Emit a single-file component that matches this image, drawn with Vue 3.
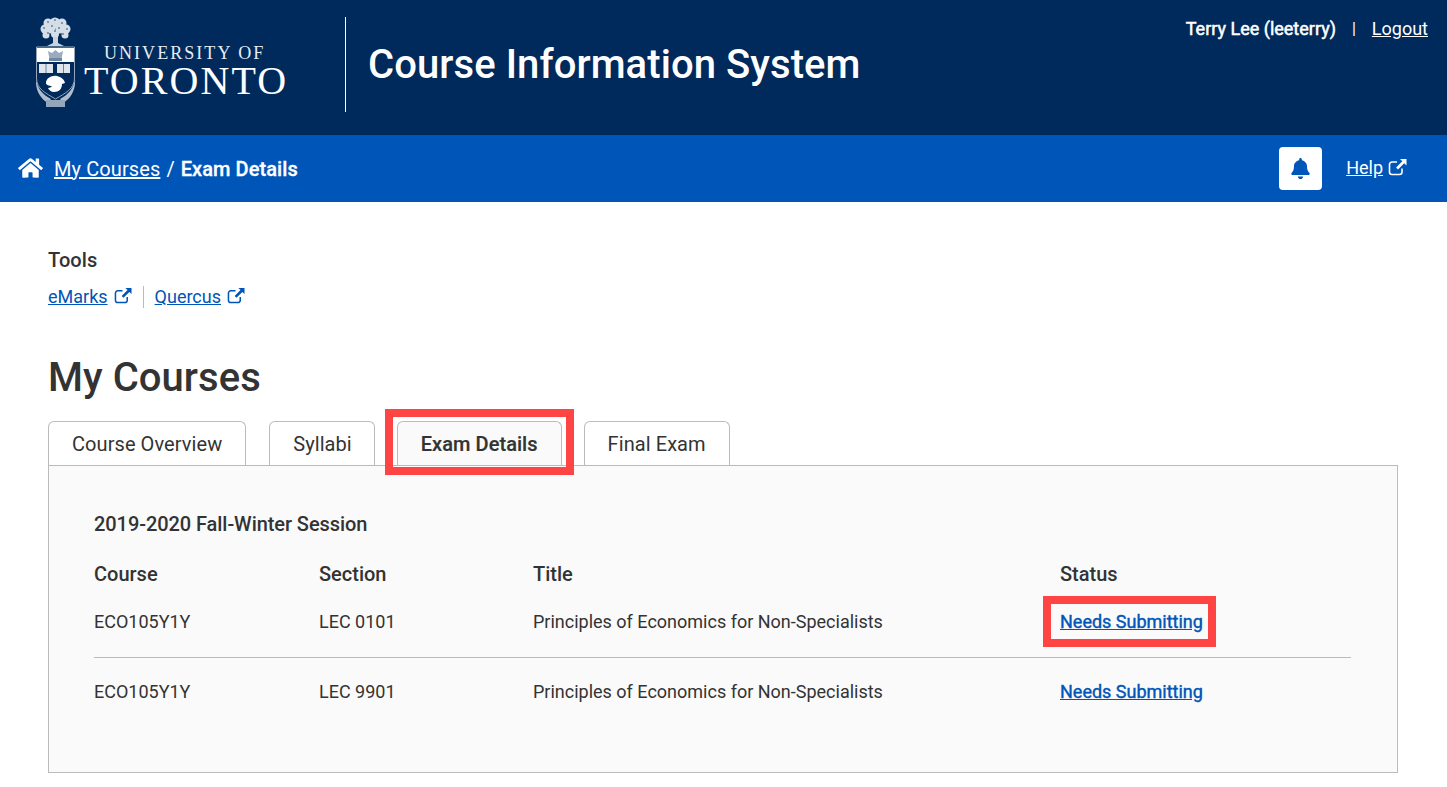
<template>
  <div class="page">
    <!-- Header -->
    <header class="top">
      <div class="logo">
        <svg class="crest" viewBox="0 0 40 90" width="40" height="90">
          <!-- tree -->
          <g fill="#d5dde6">
            <circle cx="19" cy="6" r="5.500" />
            <circle cx="12" cy="6" r="4.500" />
            <circle cx="26" cy="6" r="4.500" />
            <circle cx="9" cy="12" r="4.500" />
            <circle cx="30" cy="12" r="4.500" />
            <circle cx="15" cy="12" r="4.500" />
            <circle cx="24" cy="12" r="4.500" />
            <circle cx="10" cy="18" r="3.500" />
            <circle cx="29" cy="18" r="3.500" />
            <circle cx="19" cy="17" r="4" />
          </g>
          <g fill="#5a779b">
            <circle cx="12" cy="5" r="0.900" />
            <circle cx="19" cy="3" r="0.900" />
            <circle cx="26" cy="6" r="0.900" />
            <circle cx="8" cy="11" r="0.900" />
            <circle cx="16" cy="9" r="0.900" />
            <circle cx="23" cy="11" r="0.900" />
            <circle cx="31" cy="12" r="0.900" />
            <circle cx="12" cy="16" r="0.900" />
            <circle cx="27" cy="17" r="0.900" />
            <circle cx="19" cy="14" r="0.900" />
          </g>
          <path d="M17 20h5v6l6 3H11l6-3z" fill="#c9d3de" />
          <!-- shield -->
          <path d="M0.500 30h38v31c0 11-9 15-19 21C9.500 76 0.500 72 0.500 61z" fill="#002a5c" stroke="#93a6bc" stroke-width="1" />
          <rect x="1" y="31" width="37" height="14" fill="#fff" />
          <path d="M12 34l4 2 3.500-3 3.500 3 4-2-1.500 8h-12z" fill="#9aabbf" />
          <rect x="13" y="41" width="13" height="3" fill="#6d86a3" />
          <!-- books -->
          <path d="M3 47h14v9H3zM21 47h13v9H21z" fill="#dfe5ec" />
          <path d="M10 47v9M27.500 47v9" stroke="#6b84a1" stroke-width="1" />
          <!-- beaver -->
          <path d="M10 66c0-5 6-8 11-7 4 1 7 3 8 7l-3 1c0 5-3 8-8 8-3 0-5-2-6-4 2 0 3-1 4-2-3 0-6-1-6-3z" fill="#fff" />
          <!-- scrolls -->
          <path d="M0 62c1 9 7 16 15 20l-3 4C4 82-1 72 0 62zM39 62c-1 9-7 16-15 20l3 4c8-4 13-14 12-24z" fill="#aebccc" />
          <rect x="10" y="83" width="19" height="7" fill="#93a6bc" />
        </svg>
        <div class="wordmark">
          <span class="uni">UNIVERSITY OF</span>
          <span class="uoft">TORONTO</span>
        </div>
      </div>
      <div class="divider"></div>
      <h1 class="system">Course Information System</h1>
      <div class="user">
        <strong>Terry Lee (leeterry)</strong>
        <span class="pipe">|</span>
        <a href="#">Logout</a>
      </div>
    </header>

    <!-- Breadcrumb bar -->
    <nav class="crumbs">
      <svg class="home" viewBox="0 0 576 512" width="25" height="22">
        <path fill="#fff" d="M280.37 148.26L96 300.11V464a16 16 0 0 0 16 16l112.06-.29a16 16 0 0 0 15.92-16V368a16 16 0 0 1 16-16h64a16 16 0 0 1 16 16v95.64a16 16 0 0 0 16 16.05L464 480a16 16 0 0 0 16-16V300L295.67 148.26a12.19 12.19 0 0 0-15.3 0zM571.6 251.47L488 182.56V44.05a12 12 0 0 0-12-12h-56a12 12 0 0 0-12 12v72.61L318.47 43a48 48 0 0 0-61 0L4.34 251.47a12 12 0 0 0-1.6 16.9l25.5 31A12 12 0 0 0 45.15 301l235.22-193.74a12.19 12.19 0 0 1 15.3 0L530.9 301a12 12 0 0 0 16.9-1.6l25.5-31a12 12 0 0 0-1.7-16.93z" />
      </svg>
      <a href="#" class="crumb-link">My Courses</a>
      <span class="slash">/</span>
      <strong class="crumb-here">Exam Details</strong>
      <button class="bell" type="button">
        <svg viewBox="0 0 448 512" width="19" height="21">
          <path fill="#0055b8" d="M224 512c35.32 0 63.97-28.65 63.97-64H160.03c0 35.35 28.65 64 63.97 64zm215.39-149.71c-19.32-20.76-55.47-51.99-55.47-154.29 0-77.7-54.48-139.9-127.94-155.16V32c0-17.67-14.32-32-31.98-32s-31.98 14.33-31.98 32v20.84C118.56 68.1 64.08 130.3 64.08 208c0 102.3-36.15 133.53-55.47 154.29-6 6.45-8.66 14.16-8.61 21.71.11 16.4 12.98 32 32.1 32h383.8c19.12 0 32-15.6 32.1-32 .05-7.55-2.61-15.27-8.61-21.71z" />
        </svg>
      </button>
      <a href="#" class="help">Help</a>
      <svg class="ext ext-help" viewBox="0 0 19 18" width="19" height="18">
        <path d="M14 10.500V14a2.500 2.500 0 0 1-2.500 2.500H4A2.500 2.500 0 0 1 1.500 14V6.500A2.500 2.500 0 0 1 4 4h5" fill="none" stroke="#fff" stroke-width="1.600" />
        <path d="M12 1h6.500v6.500l-2.300-2.300-6.200 6.200-1.900-1.900 6.200-6.200z" fill="#fff" />
      </svg>
    </nav>

    <main class="content">
      <section class="tools">
        <h2>Tools</h2>
        <div class="tool-links">
          <a href="#">eMarks</a>
          <svg class="ext" viewBox="0 0 19 18" width="18" height="17">
            <path d="M14 10.500V14a2.500 2.500 0 0 1-2.500 2.500H4A2.500 2.500 0 0 1 1.500 14V6.500A2.500 2.500 0 0 1 4 4h5" fill="none" stroke="#0055b8" stroke-width="1.600" />
            <path d="M12 1h6.500v6.500l-2.300-2.300-6.200 6.200-1.900-1.900 6.200-6.200z" fill="#0055b8" />
          </svg>
          <span class="tool-sep"></span>
          <a href="#">Quercus</a>
          <svg class="ext" viewBox="0 0 19 18" width="18" height="17">
            <path d="M14 10.500V14a2.500 2.500 0 0 1-2.500 2.500H4A2.500 2.500 0 0 1 1.500 14V6.500A2.500 2.500 0 0 1 4 4h5" fill="none" stroke="#0055b8" stroke-width="1.600" />
            <path d="M12 1h6.500v6.500l-2.300-2.300-6.200 6.200-1.900-1.900 6.200-6.200z" fill="#0055b8" />
          </svg>
        </div>
      </section>

      <h2 class="heading">My Courses</h2>

      <div class="tabs">
        <div
          v-for="tab in tabs"
          :key="tab.label"
          class="tab"
          :class="{ active: tab.active }"
        >
          {{ tab.label }}
          <span v-if="tab.active" class="mark mark-tab"></span>
        </div>
      </div>

      <section class="panel">
        <h3 class="session">2019-2020 Fall-Winter Session</h3>
        <div class="row head">
          <div>Course</div>
          <div>Section</div>
          <div>Title</div>
          <div>Status</div>
        </div>
        <div v-for="(item, i) in courses" :key="item.section" class="row item" :class="{ first: i === 0 }">
          <div>{{ item.course }}</div>
          <div>{{ item.section }}</div>
          <div>{{ item.title }}</div>
          <div class="status">
            <a href="#">Needs Submitting</a>
            <span v-if="i === 0" class="mark mark-status"></span>
          </div>
        </div>
      </section>
    </main>
  </div>
</template>

<script setup>
const tabs = [
  { label: 'Course Overview' },
  { label: 'Syllabi' },
  { label: 'Exam Details', active: true },
  { label: 'Final Exam' }
];

const courses = [
  { course: 'ECO105Y1Y', section: 'LEC 0101', title: 'Principles of Economics for Non-Specialists' },
  { course: 'ECO105Y1Y', section: 'LEC 9901', title: 'Principles of Economics for Non-Specialists' }
];
</script>

<style>
html, body {
  margin: 0;
  background: #fff;
}
</style>

<style scoped>
.page {
  font-family: Roboto, "Liberation Sans", sans-serif;
  color: #333;
  min-height: 787px;
  overflow: hidden;
}

a {
  color: #0055b8;
}

/* Header */
.top {
  height: 135px;
  background: #002a5c;
  color: #fff;
  display: flex;
  align-items: center;
  padding-left: 36px;
  position: relative;
  box-sizing: border-box;
}

.logo {
  display: flex;
  align-items: flex-start;
  width: 251px;
  height: 135px;
  padding-top: 17px;
  box-sizing: border-box;
}

.crest {
  flex: none;
  display: block;
}

.wordmark {
  display: flex;
  flex-direction: column;
  align-items: center;
  font-family: "Liberation Serif", serif;
  color: #e8edf3;
  margin-left: 8px;
  margin-top: 26px;
  white-space: nowrap;
}

.uni {
  font-size: 18px;
  letter-spacing: 2.05px;
  line-height: 20px;
  margin-left: -3px;
}

.uoft {
  font-size: 40px;
  line-height: 36px;
  letter-spacing: 2.1px;
  color: #fff;
}

.divider {
  width: 1px;
  height: 95px;
  background: #fff;
  margin: 0 23px 6px 58px;
}

.system {
  font-size: 40px;
  font-weight: 500;
  letter-spacing: 0.08px;
  margin: 0 0 6px -1px;
  white-space: nowrap;
}

.user {
  position: absolute;
  top: 18px;
  right: 19px;
  font-size: 18px;
  line-height: 22px;
  display: flex;
}

.user strong {
  font-weight: 400;
  -webkit-text-stroke: 0.5px #fff;
}

.pipe {
  margin: 0 16px;
  font-size: 16px;
}

.user a {
  color: #fff;
}

/* Breadcrumb bar */
.crumbs {
  height: 67px;
  background: #0055b8;
  color: #fff;
  display: flex;
  align-items: center;
  font-size: 20px;
  padding-left: 18px;
  padding-right: 40px;
  box-sizing: border-box;
}

.home {
  margin-right: 11px;
  margin-top: -2px;
}

.crumb-link {
  color: #fff;
  letter-spacing: 0.1px;
}

.slash {
  margin: 0 6px;
}

.crumb-here {
  font-weight: 500;
  letter-spacing: 0.08px;
  -webkit-text-stroke: 0.3px #fff;
}

.bell {
  margin-left: auto;
  width: 43px;
  height: 43px;
  background: #fff;
  border: 0;
  border-radius: 4px;
  padding: 0;
  display: flex;
  align-items: center;
  justify-content: center;
}

.help {
  color: #fff;
  font-size: 18px;
  margin-left: 24px;
  margin-top: -2px;
}

.ext-help {
  margin-left: 5px;
  margin-top: -4px;
}

/* Content */
.content {
  padding: 0 49px 0 48px;
}

.tools {
  padding-top: 47px;
}

.tools h2 {
  font-size: 20px;
  font-weight: 500;
  letter-spacing: 0.08px;
  line-height: 23px;
  margin: 0;
}

.tool-links {
  display: flex;
  align-items: center;
  margin-top: 14px;
  font-size: 18px;
  line-height: 22px;
}

.tool-links .ext {
  margin-left: 6px;
  margin-top: -3px;
}

.tool-sep {
  width: 1px;
  height: 22px;
  background: #bbb;
  margin: 0 11px 0 11px;
}

.heading {
  font-size: 40px;
  font-weight: 500;
  letter-spacing: 0.05px;
  line-height: 50px;
  margin: 45px 0 18px;
}

.tabs {
  display: flex;
  gap: 22px;
}

.tab {
  position: relative;
  height: 44px;
  box-sizing: border-box;
  padding: 0 23px;
  border: 1px solid #bbb;
  border-bottom: 0;
  border-radius: 6px 6px 0 0;
  font-size: 20px;
  line-height: 45px;
  background: #fff;
  letter-spacing: 0.07px;
}

.tab:first-child {
  margin-right: 1px;
}

.tab:nth-child(2) {
  padding-right: 22px;
}

.tab.active {
  background: #fafafa;
  font-weight: 500;
  letter-spacing: 0.05px;
  -webkit-text-stroke: 0.2px #333;
}

.panel {
  height: 308px;
  box-sizing: border-box;
  background: #fafafa;
  border: 1px solid #bbb;
  padding: 46px 46px 0 45px;
}

.session {
  font-size: 20px;
  font-weight: 500;
  letter-spacing: -0.07px;
  line-height: 24px;
  margin: 0 0 26px;
}

.row {
  display: grid;
  grid-template-columns: 225px 214px 527px 1fr;
  font-size: 18px;
}

.head {
  font-size: 20px;
  font-weight: 500;
  line-height: 24px;
  margin-bottom: 24px;
}

.item {
  height: 70px;
  line-height: 24px;
  padding-top: 11px;
  box-sizing: border-box;
}

.item.first {
  height: 48px;
  padding-top: 0;
  border-bottom: 1px solid #bbb;
}

.item.first + .item {
  padding-top: 22px;
}

.status {
  position: relative;
}

.status a {
  font-weight: 400;
  -webkit-text-stroke: 0.4px #0055b8;
}

/* Red annotation boxes */
.mark {
  position: absolute;
  border: 8px solid #ff4444;
  box-sizing: border-box;
  pointer-events: none;
}

.mark-tab {
  left: -13px;
  right: -13px;
  top: -13px;
  bottom: -10px;
}

.mark-status {
  left: -17px;
  top: -14px;
  width: 173px;
  height: 51px;
}
</style>
